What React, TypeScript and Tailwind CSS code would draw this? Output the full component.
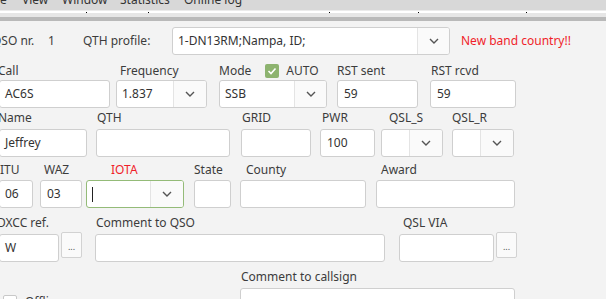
import React from "react";

function Chevron() {
  return (
    <svg width="10" height="6" viewBox="0 0 10 6" fill="none">
      <polyline points="1,1 5,5 9,1" stroke="#555" strokeWidth="1.4" />
    </svg>
  );
}

function Field({
  className,
  label,
  labelClass,
  children,
}: {
  className: string;
  label: React.ReactNode;
  labelClass?: string;
  children: React.ReactNode;
}) {
  return (
    <div className={`flex flex-col shrink-0 ${className}`}>
      <div className={`h-[18px] leading-[18px] whitespace-nowrap ${labelClass ?? ""}`}>{label}</div>
      {children}
    </div>
  );
}

function Input({ value, className }: { value?: string; className?: string }) {
  return (
    <div
      className={`h-[28px] bg-white border border-[#cfcfcf] rounded-[3px] flex items-center pl-[5px] text-[#333] whitespace-nowrap overflow-hidden ${className ?? ""}`}
    >
      {value}
    </div>
  );
}

function Combo({
  value,
  className,
  ddClass,
  children,
}: {
  value?: string;
  className?: string;
  ddClass?: string;
  children?: React.ReactNode;
}) {
  return (
    <div
      className={`h-[28px] bg-white border rounded-[3px] flex overflow-hidden ${className ?? "border-[#cfcfcf]"}`}
    >
      <div className="flex-1 flex items-center pl-[5px] text-[#333] whitespace-nowrap">
        {value}
        {children}
      </div>
      <div className={`h-full border-l border-[#e4e4e4] bg-[#fafafa] flex items-center justify-center ${ddClass ?? "w-[32px]"}`}>
        <Chevron />
      </div>
    </div>
  );
}

function DotsButton() {
  return (
    <div className="w-[21px] h-[26px] ml-[2px] mt-[18px] bg-[#fafafa] border border-[#d2d2d2] rounded-[2px] flex items-end justify-center pb-[6px] text-[9px] leading-none text-[#555] shrink-0">
      ...
    </div>
  );
}

export default function App() {
  return (
    <div className="w-[606px] h-[299px] overflow-hidden bg-[#f3f3f3] font-['Noto_Sans',sans-serif] text-[12px] text-[#3c3c3c]">
      {/* menu bar */}
      <div className="h-[10px] bg-[#d8d8d8] overflow-hidden">
        <div className="flex -mt-[8px] leading-[16px] text-[#333] whitespace-nowrap">
          <span className="-ml-[3px] w-[25px]">le</span>
          <span className="w-[40px]">View</span>
          <span className="w-[58px]">Window</span>
          <span className="w-[64px]">Statistics</span>
          <span>Online log</span>
        </div>
      </div>
      <div className="h-[1px] bg-[#ebebeb]" />
      <div className="h-[2px] bg-white relative">
        <span className="absolute left-[86px] top-[1px] w-[1px] h-[1px] bg-black" />
        <span className="absolute left-[148px] top-[1px] w-[1px] h-[1px] bg-black" />
        <span className="absolute left-[329px] top-[1px] w-[1px] h-[1px] bg-black" />
        <span className="absolute left-[418px] top-[1px] w-[1px] h-[1px] bg-black" />
        <span className="absolute left-[526px] top-[1px] w-[1px] h-[1px] bg-black" />
      </div>
      <div className="h-[4px] bg-[#e6e6e6]" />
      <div className="h-[4px] bg-[#b9b9b9]" />

      {/* row 1 */}
      <div className="mt-[6px] flex items-center h-[28px]">
        <span className="-ml-[8px] w-[56px] shrink-0">QSO nr.</span>
        <span className="w-[35px] shrink-0">1</span>
        <span className="w-[89px] shrink-0">QTH profile:</span>
        <Combo value="1-DN13RM;Nampa, ID;" className="w-[278px] shrink-0 border-[#cfcfcf]" />
        <span className="ml-[11px] text-[#f01e2a] whitespace-nowrap">New band country!!</span>
      </div>

      {/* row 2 */}
      <div className="mt-[7px] flex">
        <Field className="-ml-[1px] w-[111px]" label="Call" labelClass="-ml-[1px]">
          <Input value="AC6S" />
        </Field>
        <Field className="ml-[6px] w-[91px]" label="Frequency" labelClass="pl-[4px]">
          <Combo value="1.837" ddClass="w-[33px]" />
        </Field>
        <Field
          className="ml-[12px] w-[108px]"
          label={
            <div className="flex items-center">
              <span>Mode</span>
              <span className="ml-[14px] w-[14px] h-[14px] rounded-[2px] bg-[#8db36f] flex items-center justify-center">
                <svg width="10" height="8" viewBox="0 0 10 8" fill="none">
                  <polyline points="1.5,4 4,6.5 8.5,1.5" stroke="#fff" strokeWidth="1.6" />
                </svg>
              </span>
              <span className="ml-[7px]">AUTO</span>
            </div>
          }
        >
          <Combo value="SSB" />
        </Field>
        <Field className="ml-[10px] w-[81px]" label="RST sent">
          <Input value="59" className="pl-[6px]" />
        </Field>
        <Field className="ml-[12px] w-[86px]" label="RST rcvd" labelClass="pl-[1px]">
          <Input value="59" className="pl-[6px]" />
        </Field>
      </div>

      {/* row 3 */}
      <div className="mt-[1px] flex">
        <Field className="-ml-[1px] w-[88px] gap-[2px]" label="Name" labelClass="-ml-[1px]">
          <Input value="Jeffrey" />
        </Field>
        <Field className="ml-[9px] w-[134px] gap-[2px]" label="QTH" labelClass="pl-[1px]">
          <Input />
        </Field>
        <Field className="ml-[11px] w-[70px] gap-[2px]" label="GRID" labelClass="pl-[1px]">
          <Input />
        </Field>
        <Field className="ml-[9px] w-[55px] gap-[2px]" label="PWR" labelClass="pl-[2px]">
          <Input value="100" className="pl-[6px]" />
        </Field>
        <Field className="ml-[6px] w-[62px] gap-[2px]" label="QSL_S" labelClass="pl-[8px]">
          <Combo ddClass="w-[33px]" />
        </Field>
        <Field className="ml-[9px] w-[62px] gap-[2px]" label="QSL_R">
          <Combo ddClass="w-[33px]" />
        </Field>
      </div>

      {/* row 4 */}
      <div className="mt-[4px] flex">
        <Field className="-ml-[1px] w-[34px] gap-[1px]" label="ITU" labelClass="pl-[1px]">
          <Input value="06" />
        </Field>
        <Field className="ml-[7px] w-[42px] gap-[1px]" label="WAZ" labelClass="pl-[4px]">
          <Input value="03" className="pl-[6px]" />
        </Field>
        <Field className="ml-[4px] w-[98px] gap-[1px]" label="IOTA" labelClass="pl-[25px] text-[#f01e2a]">
          <Combo className="border-[#94bb78]" ddClass="w-[33px]">
            <span className="ml-[0px] w-[1px] h-[15px] bg-[#222]" />
          </Combo>
        </Field>
        <Field className="ml-[10px] w-[37px] gap-[1px]" label="State">
          <Input />
        </Field>
        <Field className="ml-[9px] w-[126px] gap-[1px]" label="County" labelClass="pl-[6px]">
          <Input />
        </Field>
        <Field className="ml-[10px] w-[139px] gap-[1px]" label="Award" labelClass="pl-[5px]">
          <Input />
        </Field>
      </div>

      {/* row 5 */}
      <div className="mt-[6px] flex">
        <Field className="-ml-[1px] w-[60px] gap-[2px]" label="DXCC ref." labelClass="-ml-[2px]">
          <Input value="W" />
        </Field>
        <DotsButton />
        <Field className="ml-[13px] w-[290px] gap-[2px]" label="Comment to QSO" labelClass="pl-[1px]">
          <Input />
        </Field>
        <Field className="ml-[14px] w-[95px] gap-[2px]" label="QSL VIA" labelClass="pl-[4px]">
          <Input />
        </Field>
        <DotsButton />
      </div>

      {/* row 6 */}
      <div className="mt-[6px] flex">
        <div className="w-[240px] shrink-0 flex items-start pt-[27px] pl-[3px]">
          <span className="w-[14px] h-[14px] bg-white border border-[#c8c8c8] rounded-[2px] shrink-0" />
          <span className="ml-[8px] leading-[14px]">Offline</span>
        </div>
        <Field className="w-[275px] gap-[2px]" label="Comment to callsign" labelClass="pl-[1px]">
          <Input />
        </Field>
      </div>
    </div>
  );
}
